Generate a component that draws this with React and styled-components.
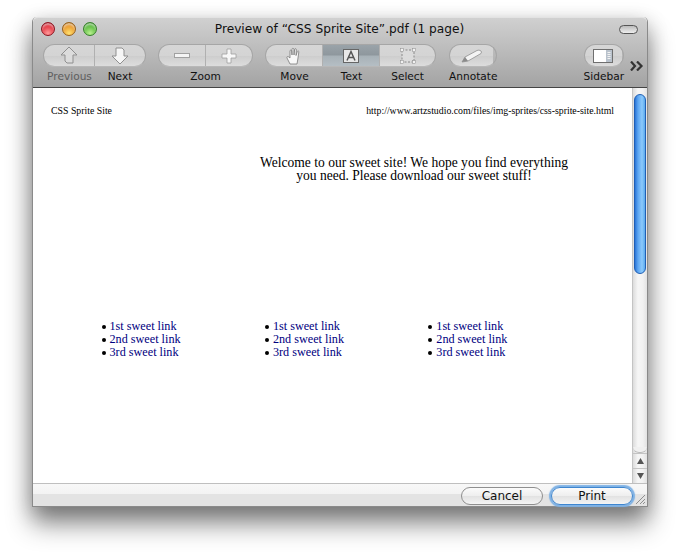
import React from 'react';
import styled, { createGlobalStyle } from 'styled-components';

const GlobalStyle = createGlobalStyle`
  html, body { margin: 0; padding: 0; background: #fff; }
  * { box-sizing: border-box; }
`;

const uiFont = `'DejaVu Sans', 'Open Sans', sans-serif`;
const pageFont = `'Liberation Serif', 'Times New Roman', serif`;

const Stage = styled.div`
  width: 680px;
  height: 555px;
  padding: 17px 32px 48px;
  overflow: hidden;
`;

const Window = styled.div`
  width: 616px;
  height: 490px;
  display: flex;
  flex-direction: column;
  border-radius: 5px 5px 0 0;
  border: 1px solid #8a8a8a;
  border-top: 0;
  box-shadow: 0 17px 26px rgba(0, 0, 0, 0.45), 0 5px 20px rgba(0, 0, 0, 0.22);
  background: #fff;
`;

const Chrome = styled.div`
  height: 71px;
  flex: none;
  border-radius: 5px 5px 0 0;
  border-top: 1px solid #e2e2e2;
  border-bottom: 1px solid #444;
  background: linear-gradient(#d0d0d0 0%, #bcbcbc 45%, #a3a3a3 100%);
`;

const TitleRow = styled.div`
  height: 22px;
  display: grid;
  grid-template-columns: 1fr auto 1fr;
  align-items: center;
  padding: 0 9px 0 8px;
`;

const Lights = styled.div`
  display: flex;
  gap: 7px;
`;

const Light = styled.span`
  width: 14px;
  height: 14px;
  border-radius: 50%;
  border: 1px solid ${(p) => p.$edge};
  background: radial-gradient(circle at 50% 85%, ${(p) => p.$glow} 0%, ${(p) => p.$base} 65%, ${(p) => p.$edge} 100%);
  box-shadow: inset 0 2px 2px rgba(255, 255, 255, 0.55);
`;

const Title = styled.div`
  text-align: center;
  white-space: nowrap;
  font: 12.2px/18px ${uiFont};
  color: #111;
`;

const Capsule = styled.span`
  justify-self: end;
  width: 19px;
  height: 9px;
  border-radius: 5px;
  border: 1px solid #555;
  background: linear-gradient(#bbb, #eee);
`;

const Toolbar = styled.div`
  display: flex;
  padding: 4px 0 0 10px;
`;

const Group = styled.div`
  flex: none;
  margin-right: ${(p) => p.$gap ?? 12}px;
`;

const Pill = styled.div`
  display: flex;
  height: 23px;
  border-radius: 12px;
  overflow: hidden;
  border: 1px solid #a6a6a6;
  border-bottom-color: #b8b8b8;
`;

const Segment = styled.div`
  width: ${(p) => p.$w}px;
  display: flex;
  align-items: center;
  justify-content: center;
  border-right: ${(p) => (p.$last ? '0' : '1px solid #b0b0b0')};
  background: ${(p) =>
    p.$on
      ? 'linear-gradient(#9aa3a9 0%, #8e979d 48%, #a7b1b7 52%, #b5bec4 100%)'
      : 'linear-gradient(#d6d6d6 0%, #d4d4d4 50%, #cdcdcd 52%, #dddddd 100%)'};
`;

const Labels = styled.div`
  display: flex;
  justify-content: center;
  margin-top: 2px;
`;

const Label = styled.div`
  width: ${(p) => (p.$w ? `${p.$w}px` : '100%')};
  display: flex;
  justify-content: center;
  white-space: nowrap;
  font: 10.6px/14px ${uiFont};
  color: ${(p) => (p.$dim ? '#5e5e5e' : '#111')};
`;

const Spacer = styled.div`
  flex: 1;
`;

const More = styled.div`
  width: 23px;
  padding: 13px 0 0 6px;
  flex: none;
`;

const Middle = styled.div`
  flex: 1;
  min-height: 0;
  display: flex;
`;

const Page = styled.div`
  flex: 1;
  padding: 17px 18px 0;
  font-family: ${pageFont};
  color: #000;
`;

const PageHead = styled.div`
  display: flex;
  justify-content: space-between;
  font-size: 9.8px;
  line-height: 12px;
`;

const Welcome = styled.p`
  margin: 39px 0 0 209px;
  width: 308px;
  text-align: center;
  font-size: 13.55px;
  line-height: 13px;
  white-space: nowrap;
`;

const Columns = styled.div`
  display: flex;
  margin: 138px 0 0 50px;
`;

const Links = styled.ul`
  width: 163.4px;
  margin: 0;
  padding: 0;
  list-style: none;
  font-size: 12.2px;
  line-height: 13px;
`;

const LinkItem = styled.li`
  display: flex;
  align-items: center;
  gap: 4px;
  &::before {
    content: '';
    width: 4px;
    height: 4px;
    margin-left: 0.5px;
    border-radius: 50%;
    background: #000;
  }
  a { color: #00007f; text-decoration: none; }
`;

const ScrollBar = styled.div`
  width: 15px;
  flex: none;
  display: flex;
  flex-direction: column;
  border-left: 1px solid #c4c4c4;
  background: linear-gradient(90deg, #dcdcdc, #f6f6f6 35%, #f2f2f2 70%, #e2e2e2);
`;

const Track = styled.div`
  flex: 1;
  padding: 6px 1px 0 1px;
`;

const Thumb = styled.div`
  height: 180px;
  border-radius: 6px;
  border: 1px solid #1f5fb5;
  background: linear-gradient(90deg, #2a74d6, #5da6f2 30%, #8ccafc 70%, #5aa9ee);
`;

const TrackEnd = styled.div`
  height: 6px;
  border-radius: 0 0 7px 7px;
  background: #f0f0f0;
  border-bottom: 1px solid #bbb;
`;

const Arrow = styled.div`
  height: 15px;
  display: flex;
  align-items: center;
  justify-content: center;
  border-top: 1px solid #c4c4c4;
  font-size: 0;
`;

const Footer = styled.div`
  position: relative;
  height: 23px;
  flex: none;
  display: flex;
  align-items: center;
  justify-content: flex-end;
  gap: 8px;
  padding: 1px 14px 0 0;
  border-top: 1px solid #bfbfbf;
  background: linear-gradient(#f8f8f8 0%, #f3f3f3 45%, #e3e3e3 46%, #e3e3e3 100%);
`;

const Button = styled.button`
  width: ${(p) => p.$w}px;
  height: 18px;
  padding: 0;
  border-radius: 9px;
  font: 12px/16px ${uiFont};
  color: #111;
  background: linear-gradient(#fbfbfb, #eee 50%, #e2e2e2 52%, #f4f4f4);
  border: 1px solid ${(p) => (p.$focus ? '#3f86cf' : '#8f8f8f')};
  box-shadow: ${(p) => (p.$focus ? '0 0 1px 2px #7fb2e5' : 'none')};
`;

const Grip = styled.svg`
  position: absolute;
  right: 1px;
  bottom: 1px;
`;

const ArrowIcon = ({ down }) => (
  <svg width="20" height="20" viewBox="0 0 20 20">
    <path
      d={down ? 'M6 2h6l2 2v6h4l-8 8-8-8h4z' : 'M10 1l8 8h-4v8H8l-2-2V9H2z'}
      fill={down ? '#f6f6f6' : '#dcdcdc'}
      stroke="#8f8f8f"
      strokeWidth="1"
    />
  </svg>
);

const MinusIcon = () => (
  <svg width="16" height="5" viewBox="0 0 16 5">
    <rect x="0.5" y="0.5" width="15" height="4" fill="#f4f4f4" stroke="#a0a0a0" />
  </svg>
);

const PlusIcon = () => (
  <svg width="16" height="16" viewBox="0 0 16 16">
    <path d="M6 1h4v5h5v4h-5v5H6v-5H1V6h5z" fill="#f8f8f8" stroke="#a0a0a0" strokeWidth="0.8" />
  </svg>
);

const HandIcon = () => (
  <svg width="16" height="18" viewBox="0 0 16 18">
    <path
      d="M4 17l-3-6c-.6-1.4 1-2 1.800-1L4 11V4c0-1.200 1.600-1.200 1.700 0l.3 4V2.300c0-1.300 1.800-1.300 1.900 0L8 8l.6-5.500c.2-1.200 1.800-1 1.700.2L10 8.500l1.300-4c.4-1.100 1.800-.6 1.500.5L12 11l-1 6z"
      fill="#f8f8f8"
      stroke="#7a7a7a"
      strokeWidth="0.8"
    />
  </svg>
);

const TextIcon = () => (
  <svg width="16" height="14" viewBox="0 0 16 14">
    <rect x="0.500" y="0.500" width="15" height="13" fill="#e8e8e8" stroke="#666" />
    <path d="M4 11.500L8 2.500l4 9M5.500 8.500h5" fill="none" stroke="#555" strokeWidth="1.500" />
  </svg>
);

const SelectIcon = () => (
  <svg width="16" height="16" viewBox="0 0 16 16">
    <rect x="2" y="2" width="12" height="12" fill="#dcdcdc" stroke="#8a8a8a" strokeDasharray="2 1.500" />
    <g fill="#f2f2f2" stroke="#8a8a8a" strokeWidth="0.500">
      <rect x="0.500" y="0.500" width="3" height="3" />
      <rect x="12.500" y="0.500" width="3" height="3" />
      <rect x="0.500" y="12.500" width="3" height="3" />
      <rect x="12.500" y="12.500" width="3" height="3" />
    </g>
  </svg>
);

const PencilIcon = () => (
  <svg width="22" height="14" viewBox="0 0 22 14">
    <path d="M1 13l3-5L16 1.500c1.500-.8 4.500 0 4.500 1.500L20 4.500 7 12z" fill="#f4f4f4" stroke="#8f8f8f" strokeWidth="0.800" />
    <path d="M1 13l3-5 3 4z" fill="#8a8a8a" />
  </svg>
);

const SidebarIcon = () => (
  <svg width="20" height="14" viewBox="0 0 20 14">
    <rect x="0.500" y="0.500" width="19" height="13" fill="#fff" stroke="#6f6f6f" />
    <rect x="13" y="1" width="6" height="12" fill="#b9c2cc" />
    <path d="M14.500 3.500h3M14.500 5.500h3M14.500 7.500h3M14.500 9.500h3" stroke="#f2f2f2" />
  </svg>
);

const ChevronIcon = () => (
  <svg width="14" height="10" viewBox="0 0 14 10">
    <path d="M1 .5L5 5 1 9.500M7 .5L11.500 5 7 9.500" fill="none" stroke="#333" strokeWidth="2.200" />
  </svg>
);

const sweetLinks = ['1st sweet link', '2nd sweet link', '3rd sweet link'];

const LinkList = () => (
  <Links>
    {sweetLinks.map((text) => (
      <LinkItem key={text}>
        <a href="#">{text}</a>
      </LinkItem>
    ))}
  </Links>
);

const App = () => {
  return (
    <Stage>
      <GlobalStyle />
      <Window>
        <Chrome>
          <TitleRow>
            <Lights>
              <Light $base="#e0303c" $glow="#ff9a9a" $edge="#8c1420" />
              <Light $base="#e8962a" $glow="#ffe070" $edge="#96601a" />
              <Light $base="#58b83c" $glow="#b8f090" $edge="#36802a" />
            </Lights>
            <Title>Preview of “CSS Sprite Site”.pdf (1 page)</Title>
            <Capsule />
          </TitleRow>
          <Toolbar>
            <Group>
              <Pill>
                <Segment $w={51}><ArrowIcon /></Segment>
                <Segment $w={50} $last><ArrowIcon down /></Segment>
              </Pill>
              <Labels>
                <Label $w={51} $dim>Previous</Label>
                <Label $w={50}>Next</Label>
              </Labels>
            </Group>
            <Group>
              <Pill>
                <Segment $w={47}><MinusIcon /></Segment>
                <Segment $w={46} $last><PlusIcon /></Segment>
              </Pill>
              <Labels>
                <Label>Zoom</Label>
              </Labels>
            </Group>
            <Group $gap={13}>
              <Pill>
                <Segment $w={57}><HandIcon /></Segment>
                <Segment $w={57} $on><TextIcon /></Segment>
                <Segment $w={55} $last><SelectIcon /></Segment>
              </Pill>
              <Labels>
                <Label $w={57}>Move</Label>
                <Label $w={57}>Text</Label>
                <Label $w={55}>Select</Label>
              </Labels>
            </Group>
            <Group>
              <Pill>
                <Segment $w={43} $last><PencilIcon /></Segment>
              </Pill>
              <Labels>
                <Label>Annotate</Label>
              </Labels>
            </Group>
            <Spacer />
            <Group $gap={0}>
              <Pill>
                <Segment $w={37} $last><SidebarIcon /></Segment>
              </Pill>
              <Labels>
                <Label>Sidebar</Label>
              </Labels>
            </Group>
            <More><ChevronIcon /></More>
          </Toolbar>
        </Chrome>
        <Middle>
          <Page>
            <PageHead>
              <span>CSS Sprite Site</span>
              <span>http://www.artzstudio.com/files/img-sprites/css-sprite-site.html</span>
            </PageHead>
            <Welcome>
              Welcome to our sweet site! We hope you find everything
              <br />
              you need. Please download our sweet stuff!
            </Welcome>
            <Columns>
              <LinkList />
              <LinkList />
              <LinkList />
            </Columns>
          </Page>
          <ScrollBar>
            <Track>
              <Thumb />
            </Track>
            <TrackEnd />
            <Arrow>
              <svg width="7" height="6" viewBox="0 0 7 6"><path d="M3.500 0l3.500 6H0z" fill="#555" /></svg>
            </Arrow>
            <Arrow>
              <svg width="7" height="6" viewBox="0 0 7 6"><path d="M0 0h7L3.500 6z" fill="#555" /></svg>
            </Arrow>
          </ScrollBar>
        </Middle>
        <Footer>
          <Button $w={82}>Cancel</Button>
          <Button $w={82} $focus>Print</Button>
          <Grip width="11" height="11" viewBox="0 0 11 11">
            <path d="M1 10l9-9M5 10l5-5M8 10l2-2" stroke="#8f8f8f" strokeWidth="1" />
          </Grip>
        </Footer>
      </Window>
    </Stage>
  );
};

export default App;
